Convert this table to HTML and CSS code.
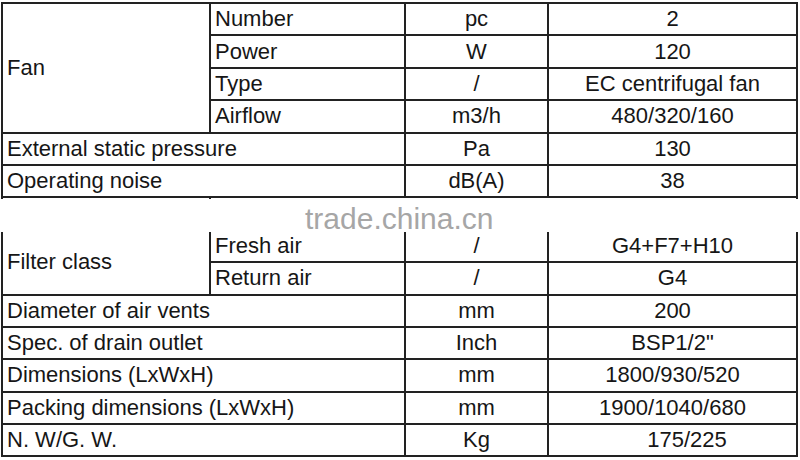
FILE: index.html
```html
<!DOCTYPE html>
<html lang="en">
<head>
<meta charset="utf-8">
<title>Specifications</title>
<link rel="stylesheet" href="styles.css">
</head>
<body>
<div class="page">
  <div class="spec">
    <div class="cell label fan">Fan</div>
    <div class="cell label">Number</div>
    <div class="cell mid">pc</div>
    <div class="cell mid">2</div>

    <div class="cell label">Power</div>
    <div class="cell mid">W</div>
    <div class="cell mid">120</div>

    <div class="cell label">Type</div>
    <div class="cell mid">/</div>
    <div class="cell mid">EC centrifugal fan</div>

    <div class="cell label">Airflow</div>
    <div class="cell mid">m3/h</div>
    <div class="cell mid">480/320/160</div>

    <div class="cell label wide">External static pressure</div>
    <div class="cell mid">Pa</div>
    <div class="cell mid">130</div>

    <div class="cell label wide">Operating noise</div>
    <div class="cell mid">dB(A)</div>
    <div class="cell mid">38</div>

    <div class="cell label filter">Filter class</div>
    <div class="cell blank"></div>

    <div class="cell label">Fresh air</div>
    <div class="cell mid">/</div>
    <div class="cell mid">G4+F7+H10</div>

    <div class="cell label">Return air</div>
    <div class="cell mid">/</div>
    <div class="cell mid">G4</div>

    <div class="cell label wide">Diameter of air vents</div>
    <div class="cell mid">mm</div>
    <div class="cell mid">200</div>

    <div class="cell label wide">Spec. of drain outlet</div>
    <div class="cell mid">Inch</div>
    <div class="cell mid">BSP1/2"</div>

    <div class="cell label wide">Dimensions (LxWxH)</div>
    <div class="cell mid">mm</div>
    <div class="cell mid">1800/930/520</div>

    <div class="cell label wide">Packing dimensions (LxWxH)</div>
    <div class="cell mid">mm</div>
    <div class="cell mid">1900/1040/680</div>

    <div class="cell label wide">N. W/G. W.</div>
    <div class="cell mid">Kg</div>
    <div class="cell mid shift">175/225</div>
  </div>
  <div class="band"></div>
  <div class="watermark">trade.china.cn</div>
</div>
</body>
</html>
```
FILE: styles.css
```css
html, body {
  margin: 0;
  padding: 0;
  background: #ffffff;
}

.page {
  position: relative;
  width: 800px;
  height: 460px;
  padding: 2px 0 0 1px;
  box-sizing: border-box;
  overflow: hidden;
}

.spec {
  display: grid;
  grid-template-columns: 206px 193px 141px 247px;
  grid-auto-rows: 30.4px;
  gap: 2px;
  padding: 2px;
  width: 797px;
  box-sizing: border-box;
  background: #222222;
  font-family: "Liberation Sans", Arial, sans-serif;
  font-size: 22px;
  color: #161616;
}

.cell {
  background: #ffffff;
  display: flex;
  align-items: center;
  white-space: nowrap;
}

.label {
  padding-left: 4px;
}

.mid {
  justify-content: center;
}

.shift {
  padding-left: 29px;
}

.fan {
  grid-row: span 4;
}

.wide {
  grid-column: span 2;
}

.filter {
  grid-row: span 3;
  padding-top: 32px;
}

.blank {
  grid-column: span 3;
}

.band {
  position: absolute;
  left: 0;
  top: 199px;
  width: 800px;
  height: 33px;
  background: #ffffff;
}

.watermark {
  position: absolute;
  left: 305px;
  top: 204px;
  font-family: "Liberation Sans", Arial, sans-serif;
  font-size: 30px;
  line-height: 30px;
  color: #a6a6a6;
  white-space: nowrap;
}
```
